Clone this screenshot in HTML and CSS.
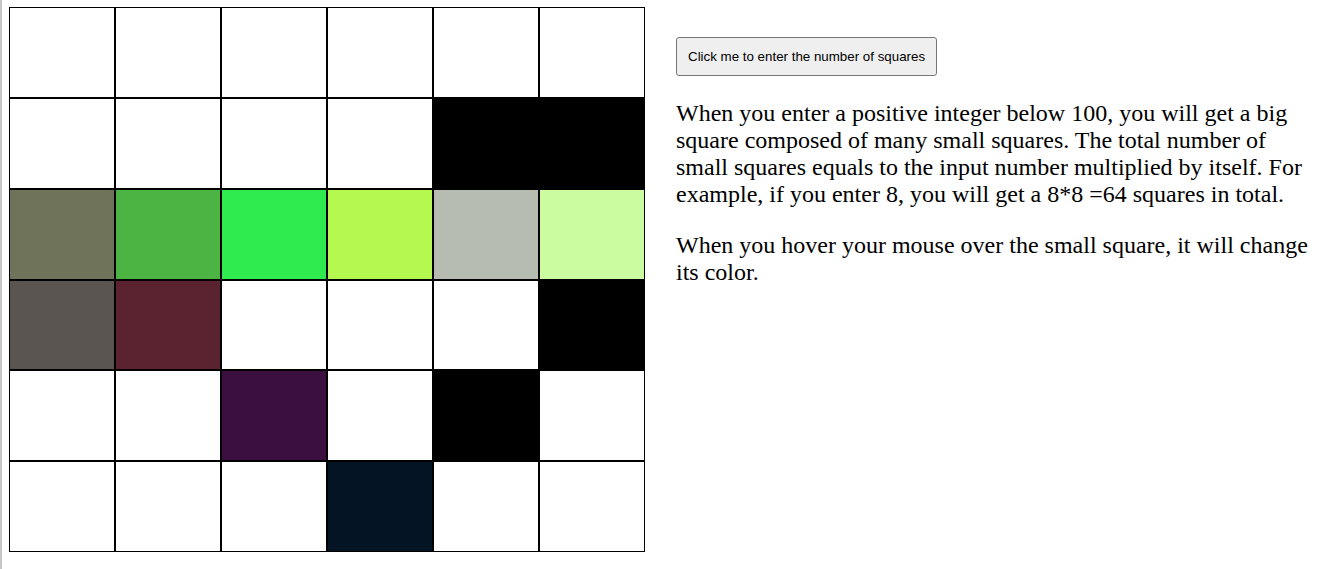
FILE: index.html
```html
<!DOCTYPE html>
<html lang="en">
<head>
<meta charset="utf-8">
<title>Squares</title>
<link rel="stylesheet" href="styles.css">
</head>
<body>
<div class="board">
  <div class="cell"></div><div class="cell"></div><div class="cell"></div><div class="cell"></div><div class="cell"></div><div class="cell"></div>
  <div class="cell"></div><div class="cell"></div><div class="cell"></div><div class="cell"></div><div class="cell c-black"></div><div class="cell c-black"></div>
  <div class="cell c-olive"></div><div class="cell c-green"></div><div class="cell c-bright"></div><div class="cell c-lime"></div><div class="cell c-gray"></div><div class="cell c-pale"></div>
  <div class="cell c-dark"></div><div class="cell c-maroon"></div><div class="cell"></div><div class="cell"></div><div class="cell"></div><div class="cell c-black"></div>
  <div class="cell"></div><div class="cell"></div><div class="cell c-purple"></div><div class="cell"></div><div class="cell c-black"></div><div class="cell"></div>
  <div class="cell"></div><div class="cell"></div><div class="cell"></div><div class="cell c-navy"></div><div class="cell"></div><div class="cell"></div>
</div>
<div class="side">
  <button class="btn" type="button">Click me to enter the number of squares</button>
  <p class="text">When you enter a positive integer below 100, you will get a big square composed of many small squares. The total number of small squares equals to the input number multiplied by itself. For example, if you enter 8, you will get a 8*8 =64 squares in total.</p>
  <p class="text">When you hover your mouse over the small square, it will change its color.</p>
</div>
</body>
</html>
```
FILE: styles.css
```css
html {
  border-left: 2px solid #c6c6c6;
  background: #ffffff;
  min-height: 100vh;
}
body {
  margin: 7px 8px 0 7px;
  display: flex;
  gap: 31px;
  font-family: "Liberation Serif", "Times New Roman", serif;
  color: #000;
}
.board {
  width: 636px;
  height: 545px;
  flex: 0 0 636px;
  display: grid;
  grid-template-columns: repeat(6, 1fr);
  grid-template-rows: repeat(6, 1fr);
}
.cell {
  box-sizing: border-box;
  border: 1px solid #000;
  background: #fff;
}
.c-black { background: #000; }
.c-olive { background: #6e735a; }
.c-green { background: #4bb443; }
.c-bright { background: #2feb50; }
.c-lime { background: #b5f84f; }
.c-gray { background: #b7bcb3; }
.c-pale { background: #ccfca0; }
.c-dark { background: #5a5550; }
.c-maroon { background: #5a232f; }
.c-purple { background: #3c0f41; }
.c-navy { background: #051424; }
.side {
  flex: 1;
  padding-top: 30px;
}
.btn {
  font-family: "Liberation Sans", Arial, sans-serif;
  font-size: 13.333px;
  line-height: 17px;
  padding: 10px 11px;
  background: #efefef;
  border: 1px solid #767676;
  border-radius: 3px;
  color: #000;
}
.text {
  font-size: 24px;
  margin: 24px 0;
}
```
